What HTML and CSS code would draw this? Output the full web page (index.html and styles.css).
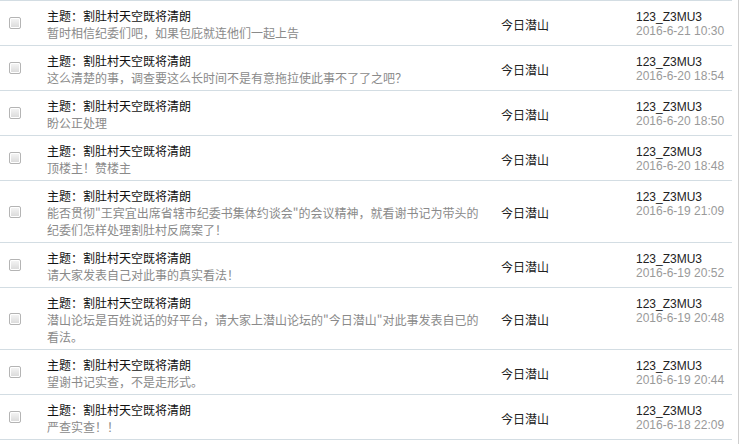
FILE: index.html
```html
<!DOCTYPE html>
<html lang="zh-CN">
<head>
<meta charset="utf-8">
<title>回复列表</title>
<link rel="stylesheet" href="styles.css">
</head>
<body>
<div class="panel">
  <ul class="list">
    <li class="row">
      <span class="chk"></span>
      <div class="topic"><div class="title">主题：割肚村天空既将清朗</div><div class="reply">暂时相信纪委们吧，如果包庇就连他们一起上告</div></div>
      <div class="forum">今日潜山</div>
      <div class="meta"><div class="user">123_Z3MU3</div><div class="date">2016-6-21 10:30</div></div>
    </li>
    <li class="row">
      <span class="chk"></span>
      <div class="topic"><div class="title">主题：割肚村天空既将清朗</div><div class="reply">这么清楚的事，调查要这么长时间不是有意拖拉使此事不了了之吧？</div></div>
      <div class="forum">今日潜山</div>
      <div class="meta"><div class="user">123_Z3MU3</div><div class="date">2016-6-20 18:54</div></div>
    </li>
    <li class="row">
      <span class="chk"></span>
      <div class="topic"><div class="title">主题：割肚村天空既将清朗</div><div class="reply">盼公正处理</div></div>
      <div class="forum">今日潜山</div>
      <div class="meta"><div class="user">123_Z3MU3</div><div class="date">2016-6-20 18:50</div></div>
    </li>
    <li class="row">
      <span class="chk"></span>
      <div class="topic"><div class="title">主题：割肚村天空既将清朗</div><div class="reply">顶楼主！赞楼主</div></div>
      <div class="forum">今日潜山</div>
      <div class="meta"><div class="user">123_Z3MU3</div><div class="date">2016-6-20 18:48</div></div>
    </li>
    <li class="row">
      <span class="chk"></span>
      <div class="topic"><div class="title">主题：割肚村天空既将清朗</div><div class="reply">能否贯彻"王宾宜出席省辖市纪委书集体约谈会"的会议精神，就看谢书记为带头的纪委们怎样处理割肚村反腐案了！</div></div>
      <div class="forum">今日潜山</div>
      <div class="meta"><div class="user">123_Z3MU3</div><div class="date">2016-6-19 21:09</div></div>
    </li>
    <li class="row">
      <span class="chk"></span>
      <div class="topic"><div class="title">主题：割肚村天空既将清朗</div><div class="reply">请大家发表自己对此事的真实看法！</div></div>
      <div class="forum">今日潜山</div>
      <div class="meta"><div class="user">123_Z3MU3</div><div class="date">2016-6-19 20:52</div></div>
    </li>
    <li class="row">
      <span class="chk"></span>
      <div class="topic"><div class="title">主题：割肚村天空既将清朗</div><div class="reply">潜山论坛是百姓说话的好平台，请大家上潜山论坛的"今日潜山"对此事发表自已的看法。</div></div>
      <div class="forum">今日潜山</div>
      <div class="meta"><div class="user">123_Z3MU3</div><div class="date">2016-6-19 20:48</div></div>
    </li>
    <li class="row">
      <span class="chk"></span>
      <div class="topic"><div class="title">主题：割肚村天空既将清朗</div><div class="reply">望谢书记实查，不是走形式。</div></div>
      <div class="forum">今日潜山</div>
      <div class="meta"><div class="user">123_Z3MU3</div><div class="date">2016-6-19 20:44</div></div>
    </li>
    <li class="row">
      <span class="chk"></span>
      <div class="topic"><div class="title">主题：割肚村天空既将清朗</div><div class="reply">严查实查！！</div></div>
      <div class="forum">今日潜山</div>
      <div class="meta"><div class="user">123_Z3MU3</div><div class="date">2016-6-18 22:09</div></div>
    </li>
  </ul>
</div>
</body>
</html>
```
FILE: styles.css
```css
html, body {
  margin: 0;
  padding: 0;
  background: #fff;
}
body {
  font-family: "Liberation Sans", "Noto Sans CJK SC", sans-serif;
  font-size: 12px;
  color: #222;
}
.panel {
  width: 732px;
  padding-right: 6px;
  border-right: 1px solid #cfcfcf;
  min-height: 444px;
}
.list {
  list-style: none;
  margin: 0;
  padding: 0;
  border-top: 1px solid #d3dde3;
}
.row {
  display: grid;
  grid-template-columns: 47px 454px 135px 96px;
  border-bottom: 1px solid #d3dde3;
  min-height: 44px;
}
.chk {
  align-self: center;
  justify-self: start;
  margin-left: 9px;
  width: 10px;
  height: 10px;
  border: 1px solid #b4b4b4;
  border-radius: 2px;
  background: linear-gradient(#f6f6f6, #d9d9d9);
  box-shadow: inset 0 0 0 1px #fff;
}
.topic {
  padding: 6px 0 4px;
  width: 440px;
}
.title {
  font-family: "Noto Sans CJK SC", sans-serif;
  line-height: 17px;
  color: #111;
}
.reply {
  font-family: "Noto Sans CJK SC", sans-serif;
  line-height: 17px;
  color: #8a8a8a;
}
.forum {
  align-self: center;
  font-family: "Noto Sans CJK SC", sans-serif;
  color: #222;
  padding-top: 2px;
}
.meta {
  padding-top: 9px;
  line-height: 14px;
}
.user {
  color: #222;
}
.date {
  color: #9a9a9a;
}
```
